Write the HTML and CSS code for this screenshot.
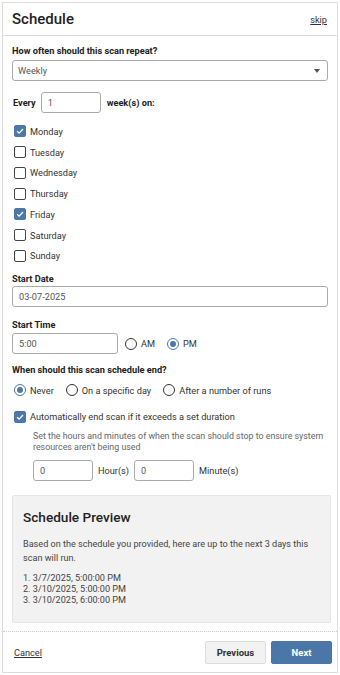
FILE: index.html
```html
<html>
  <head>
    <title>Schedule</title>
    <meta name="viewport" content="width=device-width, initial-scale=1.0" />
    <meta charset="UTF-8" />
    <link rel="stylesheet" href="styles.css">
  </head>
  <body>
    <div class="modal">
      <div class="header">
        <h1>Schedule</h1>
        <a href="#" class="skip">skip</a>
      </div>
      <div class="content">
        <div class="label first">How often should this scan repeat?</div>
        <div class="select">
          <span>Weekly</span>
          <span class="caret"></span>
        </div>

        <div class="every">
          <span class="bold">Every</span>
          <div class="input small">1</div>
          <span class="bold">week(s) on:</span>
        </div>

        <div class="days">
          <div class="check-row"><span class="box checked"><svg viewBox="0 0 12 12"><path d="M2.5 6.2 L5 8.6 L9.6 3.6" /></svg></span>Monday</div>
          <div class="check-row"><span class="box"></span>Tuesday</div>
          <div class="check-row"><span class="box"></span>Wednesday</div>
          <div class="check-row"><span class="box"></span>Thursday</div>
          <div class="check-row"><span class="box checked"><svg viewBox="0 0 12 12"><path d="M2.5 6.2 L5 8.6 L9.6 3.6" /></svg></span>Friday</div>
          <div class="check-row"><span class="box"></span>Saturday</div>
          <div class="check-row"><span class="box"></span>Sunday</div>
        </div>

        <div class="label date-label">Start Date</div>
        <div class="input">03-07-2025</div>

        <div class="label time-label">Start Time</div>
        <div class="time-row">
          <div class="input time">5:00</div>
          <div class="radio"><span class="dot"></span>AM</div>
          <div class="radio"><span class="dot on"></span>PM</div>
        </div>

        <div class="label end-label">When should this scan schedule end?</div>
        <div class="end-row">
          <div class="radio"><span class="dot on"></span>Never</div>
          <div class="radio"><span class="dot"></span>On a specific day</div>
          <div class="radio"><span class="dot"></span>After a number of runs</div>
        </div>

        <div class="check-row auto"><span class="box checked"><svg viewBox="0 0 12 12"><path d="M2.5 6.2 L5 8.6 L9.6 3.6" /></svg></span>Automatically end scan if it exceeds a set duration</div>
        <p class="help">Set the hours and minutes of when the scan should stop to ensure system resources aren't being used</p>
        <div class="duration">
          <div class="input dur">0</div>
          <span>Hour(s)</span>
          <div class="input dur">0</div>
          <span>Minute(s)</span>
        </div>

        <div class="preview">
          <h2>Schedule Preview</h2>
          <p>Based on the schedule you provided, here are up to the next 3 days this scan will run.</p>
          <ol>
            <li>1. 3/7/2025, 5:00:00 PM</li>
            <li>2. 3/10/2025, 5:00:00 PM</li>
            <li>3. 3/10/2025, 6:00:00 PM</li>
          </ol>
        </div>
      </div>
      <div class="footer">
        <a href="#" class="cancel">Cancel</a>
        <div class="buttons">
          <button class="btn prev">Previous</button>
          <button class="btn next">Next</button>
        </div>
      </div>
    </div>
  </body>
</html>
```

FILE: styles.css
```css
html,
body {
  margin: 0;
  padding: 0;
  background: #fff;
  font-family: Roboto, "Liberation Sans", sans-serif;
  color: #333;
}

.modal {
  margin: 2px 2px 0 2px;
  height: 671px;
  border: 1px solid #dcdcdc;
  display: flex;
  flex-direction: column;
  box-sizing: border-box;
}

.header {
  height: 33px;
  border-bottom: 1px solid #dcdcdc;
  display: flex;
  align-items: center;
  justify-content: space-between;
  padding: 0 10px 0 9px;
  box-sizing: border-box;
}

.header h1 {
  margin: 0;
  font-size: 15px;
  font-weight: 500;
  color: #222;
}

.skip {
  font-size: 9.2px;
  color: #333;
}

.content {
  padding: 0 9px 0 9px;
  flex: 1;
}

.label,
.bold {
  font-size: 9.2px;
  font-weight: 700;
  color: #222;
  line-height: 14px;
}

.first {
  margin-top: 8px;
}

.select {
  margin-top: 2px;
  height: 21px;
  border: 1px solid #aaa;
  border-radius: 3px;
  display: flex;
  align-items: center;
  justify-content: space-between;
  padding: 0 7px 0 5px;
  font-size: 9.2px;
  color: #555;
  box-sizing: border-box;
}

.caret {
  width: 0;
  height: 0;
  border-left: 3px solid transparent;
  border-right: 3px solid transparent;
  border-top: 4px solid #555;
}

.every {
  margin-top: 11px;
  padding-left: 1px;
  display: flex;
  align-items: center;
  gap: 5px;
}

.input {
  height: 21px;
  border: 1px solid #aaa;
  border-radius: 3px;
  display: flex;
  align-items: center;
  padding: 0 6px;
  font-size: 9.2px;
  color: #555;
  box-sizing: border-box;
}

.input.small {
  width: 60px;
  margin-right: 1px;
}

.days {
  margin-top: 8px;
}

.check-row {
  display: flex;
  align-items: center;
  height: 20.75px;
  font-size: 9.2px;
  color: #333;
  padding-left: 2px;
}

.box {
  width: 12px;
  height: 12px;
  border: 1.5px solid #444;
  border-radius: 2px;
  margin-right: 4px;
  box-sizing: border-box;
  display: flex;
}

.box.checked {
  background: #4a78a8;
  border-color: #4a78a8;
}

.box svg {
  width: 100%;
  height: 100%;
}

.box svg path {
  fill: none;
  stroke: #fff;
  stroke-width: 1.6;
}

.date-label {
  margin-top: 6px;
}

.time-label {
  margin-top: 11px;
}

.time-row {
  margin-top: 1px;
  display: flex;
  align-items: center;
  gap: 12px;
}

.input.time {
  width: 106px;
  margin-right: -5px;
}

.radio {
  display: flex;
  align-items: center;
  font-size: 9.2px;
  color: #333;
}

.dot {
  width: 12px;
  height: 12px;
  border: 1.5px solid #333;
  border-radius: 50%;
  margin-right: 4px;
  box-sizing: border-box;
  display: flex;
  align-items: center;
  justify-content: center;
}

.dot.on {
  border-color: #4a78a8;
}

.dot.on::after {
  content: "";
  width: 6px;
  height: 6px;
  border-radius: 50%;
  background: #4a78a8;
}

.end-row {
  margin-top: 7px;
  display: flex;
  gap: 12px;
  padding-left: 2px;
}

.end-label {
  margin-top: 9px;
}

.auto {
  margin-top: 10px;
}

.help {
  margin: 4px 0 0 0;
  padding-left: 21px;
  font-size: 8.85px;
  line-height: 11px;
  color: #666;
}

.duration {
  margin-top: 7px;
  padding-left: 21px;
  display: flex;
  align-items: center;
  gap: 5px;
  font-size: 9.2px;
  color: #333;
}

.input.dur {
  width: 60px;
}

.preview {
  margin-top: 14px;
  margin-right: -3px;
  height: 128px;
  background: #f2f2f2;
  border: 1px solid #e4e4e4;
  border-radius: 2px;
  padding: 0 10px;
  box-sizing: border-box;
}

.preview h2 {
  margin: 13px 0 0 0;
  font-size: 13.6px;
  font-weight: 500;
  color: #222;
}

.preview p {
  margin: 12px 0 0 0;
  font-size: 9.1px;
  line-height: 14px;
  color: #444;
}

.preview ol {
  list-style: none;
  margin: 8px 0 0 0;
  padding: 0;
  font-size: 9.1px;
  line-height: 11px;
  color: #444;
}

.footer {
  height: 40px;
  border-top: 1px dotted #ccc;
  display: flex;
  align-items: center;
  justify-content: space-between;
  padding: 0 5px 0 11px;
}

.cancel {
  font-size: 9.2px;
  color: #333;
}

.buttons {
  display: flex;
  gap: 5px;
}

.btn {
  height: 23px;
  border-radius: 2px;
  font-family: Roboto, "Liberation Sans", sans-serif;
  font-size: 9.5px;
  font-weight: 700;
  cursor: pointer;
}

.prev {
  width: 61px;
  background: #f2f2f2;
  border: 1px solid #ddd;
  color: #333;
}

.next {
  width: 61px;
  background: #4a77a8;
  border: 1px solid #4a77a8;
  color: #fff;
}
```
